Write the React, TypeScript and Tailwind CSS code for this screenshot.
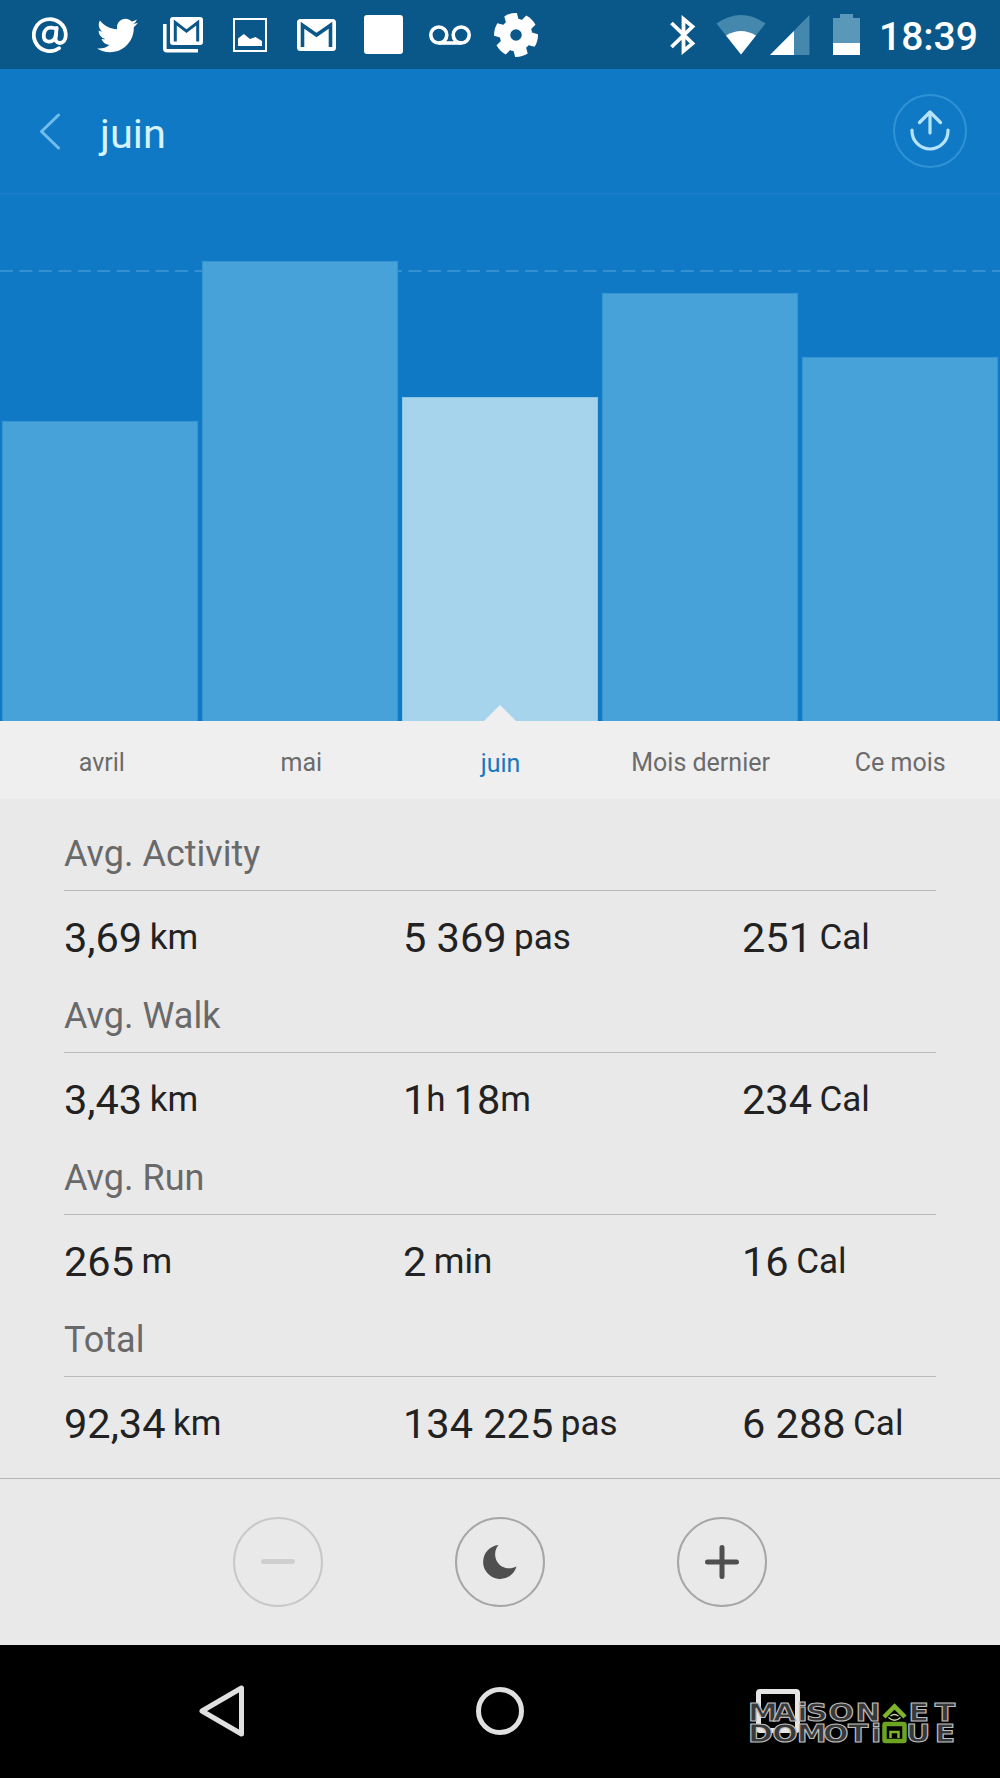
import type { ReactNode } from "react";
import { FaTwitter } from "react-icons/fa";

const months = [
  { label: "avril", height: 300 },
  { label: "mai", height: 460 },
  { label: "juin", height: 324 },
  { label: "Mois dernier", height: 428 },
  { label: "Ce mois", height: 364 },
];

const selected = 2;

const stats = [
  { title: "Avg. Activity", values: [["3,69", "km"], ["5 369", "pas"], ["251", "Cal"]] },
  { title: "Avg. Walk", values: [["3,43", "km"], ["1", "h", "18", "m"], ["234", "Cal"]] },
  { title: "Avg. Run", values: [["265", "m"], ["2", "min"], ["16", "Cal"]] },
  { title: "Total", values: [["92,34", "km"], ["134 225", "pas"], ["6 288", "Cal"]] },
];

function Slot({ children }: { children: ReactNode }) {
  return <div className="w-[66.6px] flex items-center justify-center">{children}</div>;
}

function StatusBar() {
  return (
    <div className="h-[69px] bg-[#0a5789] text-white flex items-center pl-[17px] pr-[22px]">
      <Slot>
        <svg width="36" height="36" viewBox="0 0 36 36" fill="none" stroke="currentColor" strokeWidth="3.8" strokeLinecap="round" className="mt-px">
          <path d="M27 31.2A16 16 0 1 1 33.8 17.5C34 24 30.5 26.2 27.5 26C24.5 25.8 23.2 23.5 23.6 20.5L24.6 11" />
          <path d="M24 17.5C23.6 22 20.5 25 16.5 24.6C12.8 24.2 11.4 21.3 11.8 17.5C12.3 13 15.2 10.4 19 10.6C21.2 10.7 23 11.2 24.4 11.8" />
        </svg>
      </Slot>
      <Slot>
        <FaTwitter className="w-[41px] h-[41px] ml-[2px] mt-px" />
      </Slot>
      <Slot>
        <svg width="40" height="36" viewBox="0 0 40 36" className="mt-px">
          <path d="M1.8 7V31.5Q1.8 33.7 4 33.7H35" fill="none" stroke="white" strokeWidth="3.6" />
          <rect x="7" width="33" height="28" rx="3" fill="white" />
          <path d="M12.3 24.5V5.5L23.5 14.2L34.7 5.5V24.5" fill="none" stroke="#0a5789" strokeWidth="3" />
        </svg>
      </Slot>
      <Slot>
        <svg width="34" height="34" viewBox="0 0 34 34" className="mt-px">
          <rect x="1" y="1" width="32" height="32" fill="none" stroke="white" strokeWidth="2" />
          <path d="M5 28V20.5L10.8 16L17 21L22.5 19L29 23V28Z" fill="white" />
        </svg>
      </Slot>
      <Slot>
        <svg width="39" height="32" viewBox="0 0 39 32">
          <rect width="39" height="32" rx="3.5" fill="white" />
          <path d="M5.5 28V6.2L19.5 16L33.5 6.2V28" fill="none" stroke="#0a5789" strokeWidth="3.6" />
        </svg>
      </Slot>
      <Slot>
        <div className="w-[39px] h-[39px] bg-white rounded-[3px]" />
      </Slot>
      <Slot>
        <svg width="42" height="20" viewBox="0 0 42 20" fill="none" stroke="currentColor" strokeWidth="3.6">
          <circle cx="9.8" cy="10" r="8" />
          <circle cx="32.2" cy="10" r="8" />
          <path d="M9.8 18H32.2" />
        </svg>
      </Slot>
      <Slot>
        <svg width="46" height="46" viewBox="-23 -23 46 46" fill="white">
          {[-105, -45, 15, 75, 135, 195].map((angle) => (
            <path key={angle} d="M12 -6.5L21 -6.5Q23 0 21 6.5L12 6.5Z" transform={`rotate(${angle})`} />
          ))}
          <circle r="11" fill="none" stroke="white" strokeWidth="10.5" />
        </svg>
      </Slot>

      <div className="ml-auto flex items-center">
        {/* Bluetooth */}
        <svg width="26" height="40" viewBox="0 0 26 40" fill="none" stroke="currentColor" strokeWidth="3.8" className="mr-[20px]">
          <path d="M1.5 8L22.5 28.5L13.5 36V4L22.5 11.5L1.5 32" />
        </svg>
        {/* Wifi */}
        <svg width="50" height="40" viewBox="0 0 50 40" className="mr-[4px]">
          <path d="M25 39.5L0.5 8.5Q25 -8.5 49.5 8.5Z" fill="#4488ae" />
          <path d="M25 39.5L10 20.5Q25 11.5 40 20.5Z" fill="white" />
        </svg>
        {/* Signal */}
        <svg width="40" height="40" viewBox="0 0 40 40" className="mr-[23px]">
          <path d="M0 40L39.5 0V40Z" fill="#4488ae" />
          <path d="M0 40L24 16V40Z" fill="white" />
        </svg>
        {/* Battery */}
        <svg width="27" height="41" viewBox="0 0 27 41" className="mr-[20px]">
          <path d="M0 4H7V0H20V4H27V30H0Z" fill="#5a98b9" />
          <path d="M0 29H27V41H0Z" fill="white" />
        </svg>
        <span className="text-[39px] leading-none font-medium pt-[5px] w-[98px] -ml-px mr-px whitespace-nowrap">18:39</span>
      </div>
    </div>
  );
}

function Header() {
  return (
    <div className="h-[126px] border-b-2 border-[#187dc9] flex items-center pl-[39px] pr-[33px]">
      <svg width="22" height="38" viewBox="0 0 22 38" fill="none" stroke="#70bdea" strokeWidth="3" strokeLinecap="round" strokeLinejoin="round">
        <path d="M19.5 3L2.5 19.5L19.5 36" />
      </svg>
      <h1 className="text-[41.5px] leading-none text-[#d4f3ff] ml-[39px] pt-[6px]">juin</h1>
      <div className="ml-auto w-[74px] h-[74px] rounded-full border-2 border-[#2f92d5] flex items-center justify-center">
        <svg width="42" height="42" viewBox="-21 -21 42 42" fill="none" stroke="#b5e4fa" strokeWidth="3.2" strokeLinecap="round" strokeLinejoin="round">
          <path d="M-18 -1V0A18 18 0 0 0 18 0V-1M0 2V-19M-10.5 -8.5L0 -19L10.5 -8.5" />
        </svg>
      </div>
    </div>
  );
}

function Chart() {
  return (
    <div className="relative h-[526px]">
      <svg width="1000" height="2" className="absolute top-[75px] left-0">
        <path d="M0 1H1000" stroke="#3390d1" strokeWidth="2" strokeDasharray="13 6.45" />
      </svg>
      <div className="relative h-full flex items-end">
        {months.map((month, i) => (
          <div key={month.label} className="w-[200px] px-[2px]">
            <div
              className={i === selected ? "bg-[#a5d4ec] border border-b-0 border-[#8cc5e6]" : "bg-[#46a2d8] border border-b-0 border-[#3796d1]"}
              style={{ height: month.height }}
            />
          </div>
        ))}
      </div>
      {/* Pointer of the selected month */}
      <svg width="32" height="16" className="absolute bottom-0 left-[484px]">
        <path d="M0 16L16 0L32 16Z" fill="#efefef" />
      </svg>
    </div>
  );
}

function Stats() {
  return (
    <div className="h-[679px] pt-[20px] px-16">
      {stats.map((row) => (
        <div key={row.title} className="h-[162px]">
          <div className="h-[72px] pb-px flex items-center border-b border-[#b9b9b9] text-[36px] leading-none text-[#696969]">
            {row.title}
          </div>
          <div className="h-[90px] pt-[3px] grid grid-cols-[339px_339px_1fr] items-center text-[#222222]">
            {row.values.map((parts) => (
              <div key={parts.join(" ")} className="flex items-center leading-none whitespace-nowrap">
                {parts.map((part, i) => (
                  <span
                    key={i}
                    className={
                      i % 2 === 0
                        ? i > 0 ? "text-[41.5px] ml-[8px]" : "text-[41.5px]"
                        : parts.length > 2 ? "text-[35px]" : "text-[35px] ml-[7.5px]"
                    }
                  >
                    {part}
                  </span>
                ))}
              </div>
            ))}
          </div>
        </div>
      ))}
    </div>
  );
}

function Controls() {
  return (
    <div className="h-[167px] border-t border-[#b4b4b4] pb-px flex items-center justify-center gap-[132px]">
      <button className="w-[90px] h-[90px] rounded-full border-2 border-[#c8c8c8] flex items-center justify-center">
        <div className="w-[34px] h-[5px] rounded-full bg-[#cfcfcf]" />
      </button>
      <button className="w-[90px] h-[90px] rounded-full border-2 border-[#a6a6a6] flex items-center justify-center">
        <svg width="34" height="34" viewBox="0 0 34 34">
          <path d="M15.5 0A17 17 0 1 0 33.5 21.5C27 25 18 23.5 14 16.5C10.8 10.5 12 4 15.5 0Z" fill="#4f4f4f" />
        </svg>
      </button>
      <button className="w-[90px] h-[90px] rounded-full border-2 border-[#a6a6a6] flex items-center justify-center">
        <svg width="34" height="34" viewBox="0 0 34 34" stroke="#4f4f4f" strokeWidth="5" strokeLinecap="round">
          <path d="M2.5 17H31.5M17 2.5V31.5" />
        </svg>
      </button>
    </div>
  );
}

function Watermark() {
  return (
    <svg
      width="216"
      height="66"
      viewBox="0 -10 216 66"
      className="absolute left-[748px] top-[45px] font-['DejaVu_Sans',sans-serif]"
      fontSize="24"
    >
      {/* Letters are stretched sideways, positions are in the stretched scale */}
      <g fill="#383838" stroke="#bdbdbd" strokeWidth="1" transform="scale(1.25 1)" className="font-bold">
        <text x="0 20 39.5 46.5 64.5 86" y="20.5">MAiSON</text>
        <text x="128.5 149.5" y="20.5">ET</text>
        <text x="0 19.5 39 60 80 98.5" y="42.5">DOMOTi</text>
        <text x="126.5 149.5" y="42.5">UE</text>
      </g>
      {/* House standing in for the Q */}
      <g fill="none" stroke="#7fb52b">
        <path d="M136 17L146.500 6.500L157 17" strokeWidth="4.5" />
        <path d="M140.5 17.5Q146.5 23 152.5 17.5M142.5 16Q146.5 13 150.5 16" stroke="#c5d9a2" strokeWidth="1.3" />
        <rect x="136.5" y="24" width="20" height="17" rx="1" strokeWidth="4.5" stroke="#6ca323" />
        <path d="M142.5 38V32H150.5V38" strokeWidth="2.5" />
      </g>
    </svg>
  );
}

function NavBar() {
  return (
    <div className="relative h-[133px] pb-px bg-black grid grid-cols-[446px_108px_446px] items-center">
      <svg width="48" height="54" viewBox="0 0 48 54" fill="none" stroke="#e0e0e0" strokeWidth="5" strokeLinejoin="round" className="ml-[198px]">
        <path d="M43.5 4V50L4 27Z" />
      </svg>
      <div className="w-12 h-12 mx-auto rounded-full border-5 border-[#e0e0e0]" />
      <div className="w-[44px] h-[44px] ml-[202px] rounded-[4px] border-5 border-[#e5e5e5]" />
      <Watermark />
    </div>
  );
}

export default function App() {
  return (
    <div className="w-[1000px] h-[1778px] overflow-hidden bg-[#e9e9e9] font-[Roboto,sans-serif]">
      <div className="bg-[#1079c6]">
        <StatusBar />
        <Header />
        <Chart />
      </div>
      <div className="h-[78px] bg-[#efefef] pl-[2px] grid grid-cols-5 items-center text-center text-[25px] leading-none text-[#6b6b6b]">
        {months.map((month, i) => (
          <span key={month.label} className={i === selected ? "text-[#1b79bb] pt-[7px] pr-px" : "pt-[4px]"}>
            {month.label}
          </span>
        ))}
      </div>
      <Stats />
      <Controls />
      <NavBar />
    </div>
  );
}
